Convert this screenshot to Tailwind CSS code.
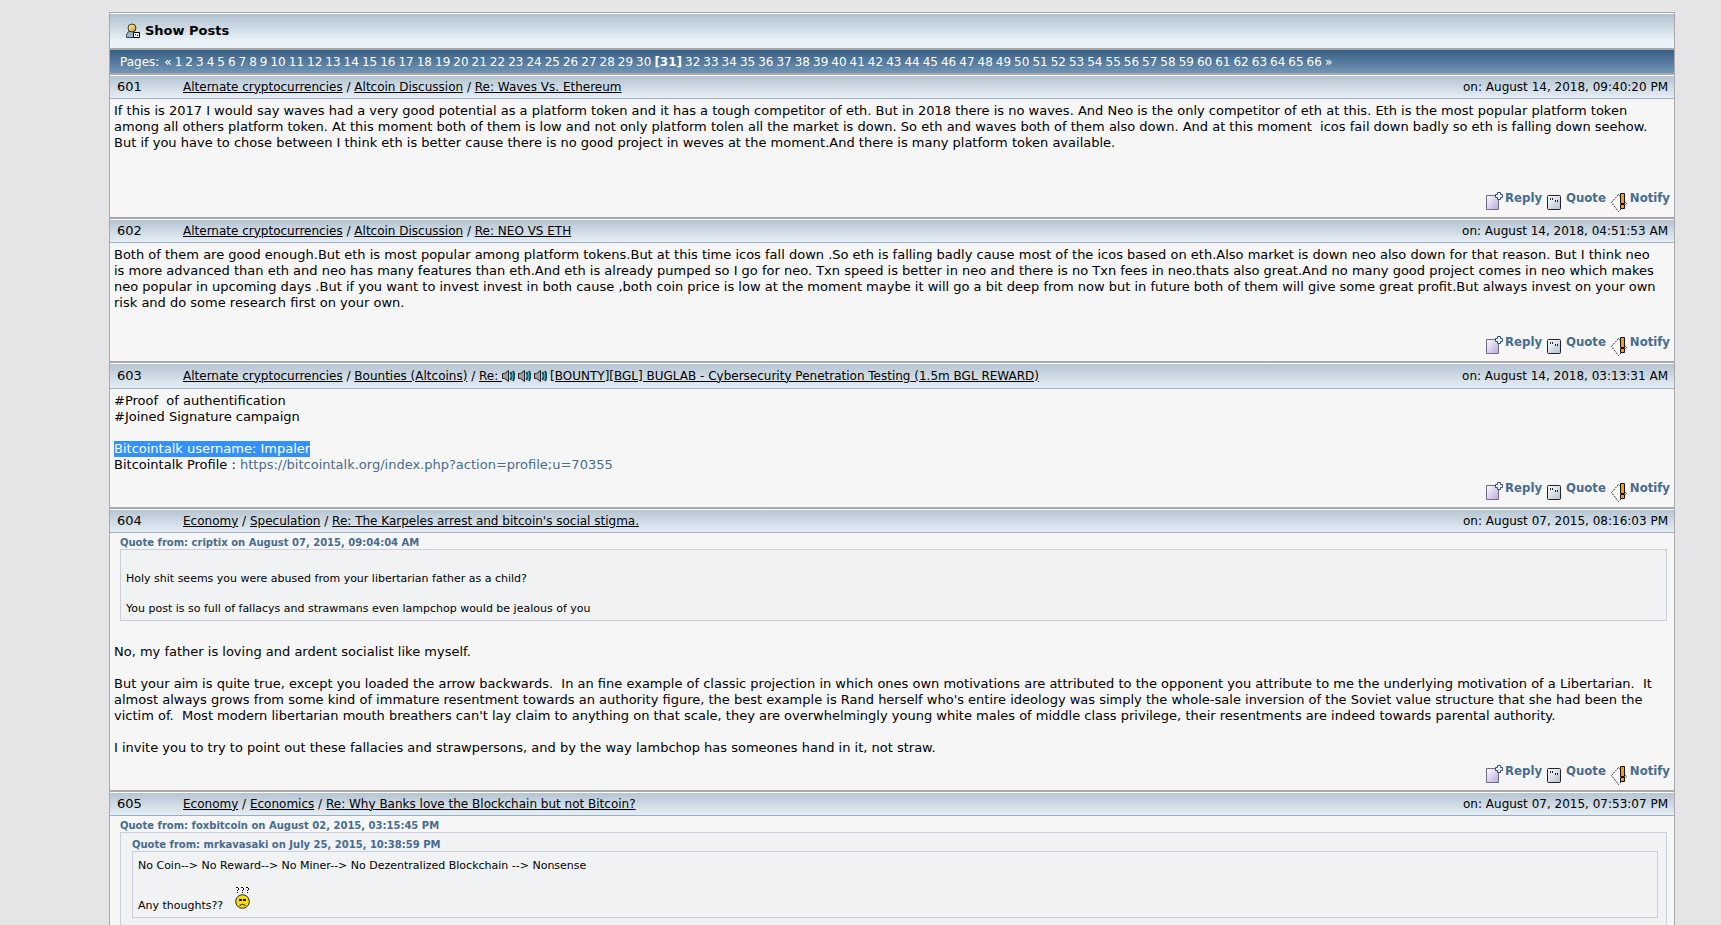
<!DOCTYPE html>
<html lang="en">
<head>
  <meta charset="UTF-8">
  <meta name="viewport" content="width=device-width, initial-scale=1.0">
  <title>Show Posts</title>
  <script src="https://cdn.jsdelivr.net/npm/@tailwindcss/browser@4"></script>
</head>
<body class="h-screen overflow-hidden bg-[#e5e5e8] pt-3 pl-[109px] pr-[46px] font-['DejaVu_Sans',sans-serif] text-[13px] leading-4 text-black">
  <!-- Icons -->
  <svg class="absolute size-0">
    <linearGradient id="g1" x1="0" y1="0" x2="1" y2="1"><stop offset="0" stop-color="#fff"/><stop offset="1" stop-color="#b8a8dc"/></linearGradient>
    <linearGradient id="g2" x1="0" y1="0" x2="1" y2="1"><stop offset="0" stop-color="#fff"/><stop offset="1" stop-color="#b4c0d0"/></linearGradient>
    <linearGradient id="g3" x1="0" y1="0" x2="1" y2="1"><stop offset="0" stop-color="#fff6d0"/><stop offset="1" stop-color="#d09410"/></linearGradient>
    <symbol id="i-reply" viewBox="0 0 17 18">
      <path d="M.5 3.500h12v14H.5z" fill="url(#g1)" stroke="#6c6c84"/>
      <path d="M11.500.5h3v2h2v3h-2v2h-3v-2h-2v-3h2z" fill="#e8f2fa" stroke="#34506c"/>
    </symbol>
    <symbol id="i-quote" viewBox="0 0 14 15">
      <rect x=".5" y=".5" width="13" height="14" rx="1" fill="url(#g2)" stroke="#222"/>
      <path d="M3.500 3v2M5.500 3v2M8.500 5v2M10.500 5v2" stroke="#222"/>
    </symbol>
    <symbol id="i-notify" viewBox="0 0 16 19">
      <path d="M7.500 1.500L.5 9.500l7 9 8-8z" fill="#f8f8f8" stroke="#333" stroke-dasharray="2 1"/>
      <path d="M9.500.5h4v10h-4zM9.500 11.500h4v4h-4z" fill="#f79a1c" stroke="#111"/>
    </symbol>
    <symbol id="i-speaker" viewBox="0 0 13 12">
      <path d="M.5 3.500h2l4-3v11l-4-3h-2z" fill="#a0a0a0" stroke="#222"/>
      <path d="M8.500 2q2 4 0 8M11 1q2.500 5 0 10" fill="none" stroke="#0b4c5c" stroke-width="2"/>
      <path d="M10 4v4" stroke="#1f9ab4"/>
    </symbol>
  </svg>

  <main class="border-x border-t border-[#a9a9a9] bg-[#f6f6f6]">
    <header class="flex h-[35px] items-center gap-1 border-t border-white bg-linear-to-b from-[#b1c2d0] to-[#ebf3f9] to-80% pl-4">
      <svg class="h-4 w-[15px]" viewBox="0 0 15 16">
        <path d="M.5 14.500v-3l2-3h6l3 3v3z" fill="#9ab4cc" stroke="#33475c"/>
        <circle cx="6" cy="5" r="4" fill="url(#g3)" stroke="#4a3a10"/>
        <path d="M7.500 9.500h6v5h-6z" fill="#fff" stroke="#000"/>
        <path d="M9 11.500h1M11 12.500h1" stroke="#000"/>
      </svg>
      <h1 class="font-bold">Show Posts</h1>
    </header>

    <nav class="flex h-[25px] items-center gap-[3px] whitespace-nowrap border-t-2 border-[#a9a9a9] bg-linear-to-b from-[#375f84] to-[#7396b6] pl-[10px] text-xs text-white" id="pages">
      <span class="mr-[2px]">Pages:</span>
      <a href="#">«</a>
    </nav>

    <article>
      <div class="flex h-[26px] items-center border-t-2 border-b border-t-[#a9a9a9] border-b-[#9aafc2] bg-linear-to-b from-[#b3c3d1] to-[#e6eef5] pl-[7px] pr-[6px] inset-shadow-[0_1px_#fff]">
        <span class="w-[66px]">601</span>
        <h2 class="flex-1 text-xs"><a class="underline" href="#">Alternate cryptocurrencies</a> / <a class="underline" href="#">Altcoin Discussion</a> / <a class="underline" href="#">Re: Waves Vs. Ethereum</a></h2>
        <time class="text-xs">on: August 14, 2018, 09:40:20 PM</time>
      </div>
      <div class="px-1 pt-1">
        <div class="min-h-20 whitespace-nowrap">If this is 2017 I would say waves had a very good potential as a platform token and it has a tough competitor of eth. But in 2018 there is no waves. And Neo is the only competitor of eth at this. Eth is the most popular platform token<br>among all others platform token. At this moment both of them is low and not only platform tolen all the market is down. So eth and waves both of them also down. And at this moment&nbsp; icos fail down badly so eth is falling down seehow.<br>But if you have to chose between I think eth is better cause there is no good project in weves at the moment.And there is many platform token available.</div>
        <div class="flex h-[34px] justify-end gap-[5px] pt-[7px] font-['DejaVu_Sans_Condensed','DejaVu_Sans',sans-serif] font-bold text-[#476c8e]">
          <a class="flex gap-[2px]" href="#"><svg class="mt-[2px] h-[18px] w-[17px]"><use href="#i-reply"/></svg>Reply</a>
          <a class="flex gap-[5px]" href="#"><svg class="mt-[5px] h-[15px] w-[14px]"><use href="#i-quote"/></svg>Quote</a>
          <a class="flex gap-[3px]" href="#"><svg class="mt-[3px] h-[19px] w-4"><use href="#i-notify"/></svg>Notify</a>
        </div>
      </div>
    </article>

    <article>
      <div class="flex h-[26px] items-center border-t-2 border-b border-t-[#a9a9a9] border-b-[#9aafc2] bg-linear-to-b from-[#b3c3d1] to-[#e6eef5] pl-[7px] pr-[6px] inset-shadow-[0_1px_#fff]">
        <span class="w-[66px]">602</span>
        <h2 class="flex-1 text-xs"><a class="underline" href="#">Alternate cryptocurrencies</a> / <a class="underline" href="#">Altcoin Discussion</a> / <a class="underline" href="#">Re: NEO VS ETH</a></h2>
        <time class="text-xs">on: August 14, 2018, 04:51:53 AM</time>
      </div>
      <div class="px-1 pt-1">
        <div class="min-h-20 whitespace-nowrap">Both of them are good enough.But eth is most popular among platform tokens.But at this time icos fall down .So eth is falling badly cause most of the icos based on eth.Also market is down neo also down for that reason. But I think neo<br>is more advanced than eth and neo has many features than eth.And eth is already pumped so I go for neo. Txn speed is better in neo and there is no Txn fees in neo.thats also great.And no many good project comes in neo which makes<br>neo popular in upcoming days .But if you want to invest invest in both cause ,both coin price is low at the moment maybe it will go a bit deep from now but in future both of them will give some great profit.But always invest on your own<br>risk and do some research first on your own.</div>
        <div class="flex h-[34px] justify-end gap-[5px] pt-[7px] font-['DejaVu_Sans_Condensed','DejaVu_Sans',sans-serif] font-bold text-[#476c8e]">
          <a class="flex gap-[2px]" href="#"><svg class="mt-[2px] h-[18px] w-[17px]"><use href="#i-reply"/></svg>Reply</a>
          <a class="flex gap-[5px]" href="#"><svg class="mt-[5px] h-[15px] w-[14px]"><use href="#i-quote"/></svg>Quote</a>
          <a class="flex gap-[3px]" href="#"><svg class="mt-[3px] h-[19px] w-4"><use href="#i-notify"/></svg>Notify</a>
        </div>
      </div>
    </article>

    <article>
      <div class="flex h-7 items-center border-t-2 border-b border-t-[#a9a9a9] border-b-[#9aafc2] bg-linear-to-b from-[#b3c3d1] to-[#e6eef5] pl-[7px] pr-[6px] inset-shadow-[0_1px_#fff]">
        <span class="w-[66px]">603</span>
        <h2 class="flex-1 text-xs"><a class="underline" href="#">Alternate cryptocurrencies</a> / <a class="underline" href="#">Bounties (Altcoins)</a> / <a class="underline" href="#">Re: <svg class="mr-[3px] inline h-3 w-[13px]"><use href="#i-speaker"/></svg><svg class="mr-[3px] inline h-3 w-[13px]"><use href="#i-speaker"/></svg><svg class="mr-[3px] inline h-3 w-[13px]"><use href="#i-speaker"/></svg>[BOUNTY][BGL] BUGLAB - Cybersecurity Penetration Testing (1.5m BGL REWARD)</a></h2>
        <time class="text-xs">on: August 14, 2018, 03:13:31 AM</time>
      </div>
      <div class="px-1 pt-1">
        <div class="min-h-20">#Proof&nbsp; of authentification<br>#Joined Signature campaign<br><br><span class="inline-block bg-[#3390ff] text-white">Bitcointalk username: Impaler</span><br>Bitcointalk Profile : <a class="text-[#476c8e]" href="#">https://bitcointalk.org/index.php?action=profile;u=70355</a></div>
        <div class="flex h-[34px] justify-end gap-[5px] pt-[7px] font-['DejaVu_Sans_Condensed','DejaVu_Sans',sans-serif] font-bold text-[#476c8e]">
          <a class="flex gap-[2px]" href="#"><svg class="mt-[2px] h-[18px] w-[17px]"><use href="#i-reply"/></svg>Reply</a>
          <a class="flex gap-[5px]" href="#"><svg class="mt-[5px] h-[15px] w-[14px]"><use href="#i-quote"/></svg>Quote</a>
          <a class="flex gap-[3px]" href="#"><svg class="mt-[3px] h-[19px] w-4"><use href="#i-notify"/></svg>Notify</a>
        </div>
      </div>
    </article>

    <article>
      <div class="flex h-[26px] items-center border-t-2 border-b border-t-[#a9a9a9] border-b-[#9aafc2] bg-linear-to-b from-[#b3c3d1] to-[#e6eef5] pl-[7px] pr-[6px] inset-shadow-[0_1px_#fff]">
        <span class="w-[66px]">604</span>
        <h2 class="flex-1 text-xs"><a class="underline" href="#">Economy</a> / <a class="underline" href="#">Speculation</a> / <a class="underline" href="#">Re: The Karpeles arrest and bitcoin's social stigma.</a></h2>
        <time class="text-xs">on: August 07, 2015, 08:16:03 PM</time>
      </div>
      <div class="px-1 pt-[3px]">
        <div class="ml-[6px] mr-[3px] mb-[7px]">
          <a class="block text-[10px] leading-[13px] font-bold text-[#476c8e]" href="#">Quote from: criptix on August 07, 2015, 09:04:04 AM</a>
          <blockquote class="border border-[#cccedc] bg-[#f0f2f4] px-[5px] pt-[6px] pb-1 text-[11px] leading-[15px]"><br>Holy shit seems you were abused from your libertarian father as a child?<br><br>You post is so full of fallacys and strawmans even lampchop would be jealous of you</blockquote>
        </div>
        <div class="whitespace-nowrap"><br>No, my father is loving and ardent socialist like myself.<br><br>But your aim is quite true, except you loaded the arrow backwards.&nbsp; In an fine example of classic projection in which ones own motivations are attributed to the opponent you attribute to me the underlying motivation of a Libertarian.&nbsp; It<br>almost always grows from some kind of immature resentment towards an authority figure, the best example is Rand herself who's entire ideology was simply the whole-sale inversion of the Soviet value structure that she had been the<br>victim of.&nbsp; Most modern libertarian mouth breathers can't lay claim to anything on that scale, they are overwhelmingly young white males of middle class privilege, their resentments are indeed towards parental authority.<br><br>I invite you to try to point out these fallacies and strawpersons, and by the way lambchop has someones hand in it, not straw.</div>
        <div class="flex h-[34px] justify-end gap-[5px] pt-[7px] font-['DejaVu_Sans_Condensed','DejaVu_Sans',sans-serif] font-bold text-[#476c8e]">
          <a class="flex gap-[2px]" href="#"><svg class="mt-[2px] h-[18px] w-[17px]"><use href="#i-reply"/></svg>Reply</a>
          <a class="flex gap-[5px]" href="#"><svg class="mt-[5px] h-[15px] w-[14px]"><use href="#i-quote"/></svg>Quote</a>
          <a class="flex gap-[3px]" href="#"><svg class="mt-[3px] h-[19px] w-4"><use href="#i-notify"/></svg>Notify</a>
        </div>
      </div>
    </article>

    <article>
      <div class="flex h-[26px] items-center border-t-2 border-b border-t-[#a9a9a9] border-b-[#9aafc2] bg-linear-to-b from-[#b3c3d1] to-[#e6eef5] pl-[7px] pr-[6px] inset-shadow-[0_1px_#fff]">
        <span class="w-[66px]">605</span>
        <h2 class="flex-1 text-xs"><a class="underline" href="#">Economy</a> / <a class="underline" href="#">Economics</a> / <a class="underline" href="#">Re: Why Banks love the Blockchain but not Bitcoin?</a></h2>
        <time class="text-xs">on: August 07, 2015, 07:53:07 PM</time>
      </div>
      <div class="px-1 pt-[3px]">
        <div class="ml-[6px] mr-[3px]">
          <a class="block text-[10px] leading-[13px] font-bold text-[#476c8e]" href="#">Quote from: foxbitcoin on August 02, 2015, 03:15:45 PM</a>
          <blockquote class="border border-[#cccedc] bg-[#f0f2f4] px-[5px] pt-[5px] pb-10 text-[11px] leading-[15px]">
            <div class="ml-[6px] mr-[3px]">
              <a class="block text-[10px] leading-[13px] font-bold text-[#476c8e]" href="#">Quote from: mrkavasaki on July 25, 2015, 10:38:59 PM</a>
              <blockquote class="border border-[#cccedc] bg-[#f0f2f4] px-[5px] pt-[6px] pb-1">
                No Coin--&gt; No Reward--&gt; No Miner--&gt; No Dezentralized Blockchain --&gt; Nonsense
                <div class="mt-[14px] flex items-end gap-3">Any thoughts??
                  <svg class="mb-1 h-[22px] w-[15px]" viewBox="0 0 15 22">
                    <path d="M1 .5h2M3.500 1v2M2 3.500h1M2.500 5v1M6 .5h2M8.500 1v2M7 3.500h1M7.500 5v1M11 .5h2M13.500 1v2M12 3.500h1M12.500 5v1" fill="none" stroke="#000"/>
                    <circle cx="7.500" cy="14.500" r="6.800" fill="#f8dc10" stroke="#222"/>
                    <path d="M4 13h3M8 13h3" stroke="#111" stroke-width="2"/>
                    <path d="M4.500 18.500q3-2.500 6 0" fill="none" stroke="#111"/>
                  </svg>
                </div>
              </blockquote>
            </div>
          </blockquote>
        </div>
      </div>
    </article>
  </main>

  <script>
    // Page links
    const nav = document.querySelector('#pages');
    for (let i = 1; i <= 66; i++) {
      const el = document.createElement(i === 31 ? 'b' : 'a');
      el.textContent = i === 31 ? '[31]' : i;
      if (i !== 31) el.href = '#';
      nav.appendChild(el);
    }
    nav.insertAdjacentHTML('beforeend', '<a href="#">»</a>');
  </script>
</body>
</html>
